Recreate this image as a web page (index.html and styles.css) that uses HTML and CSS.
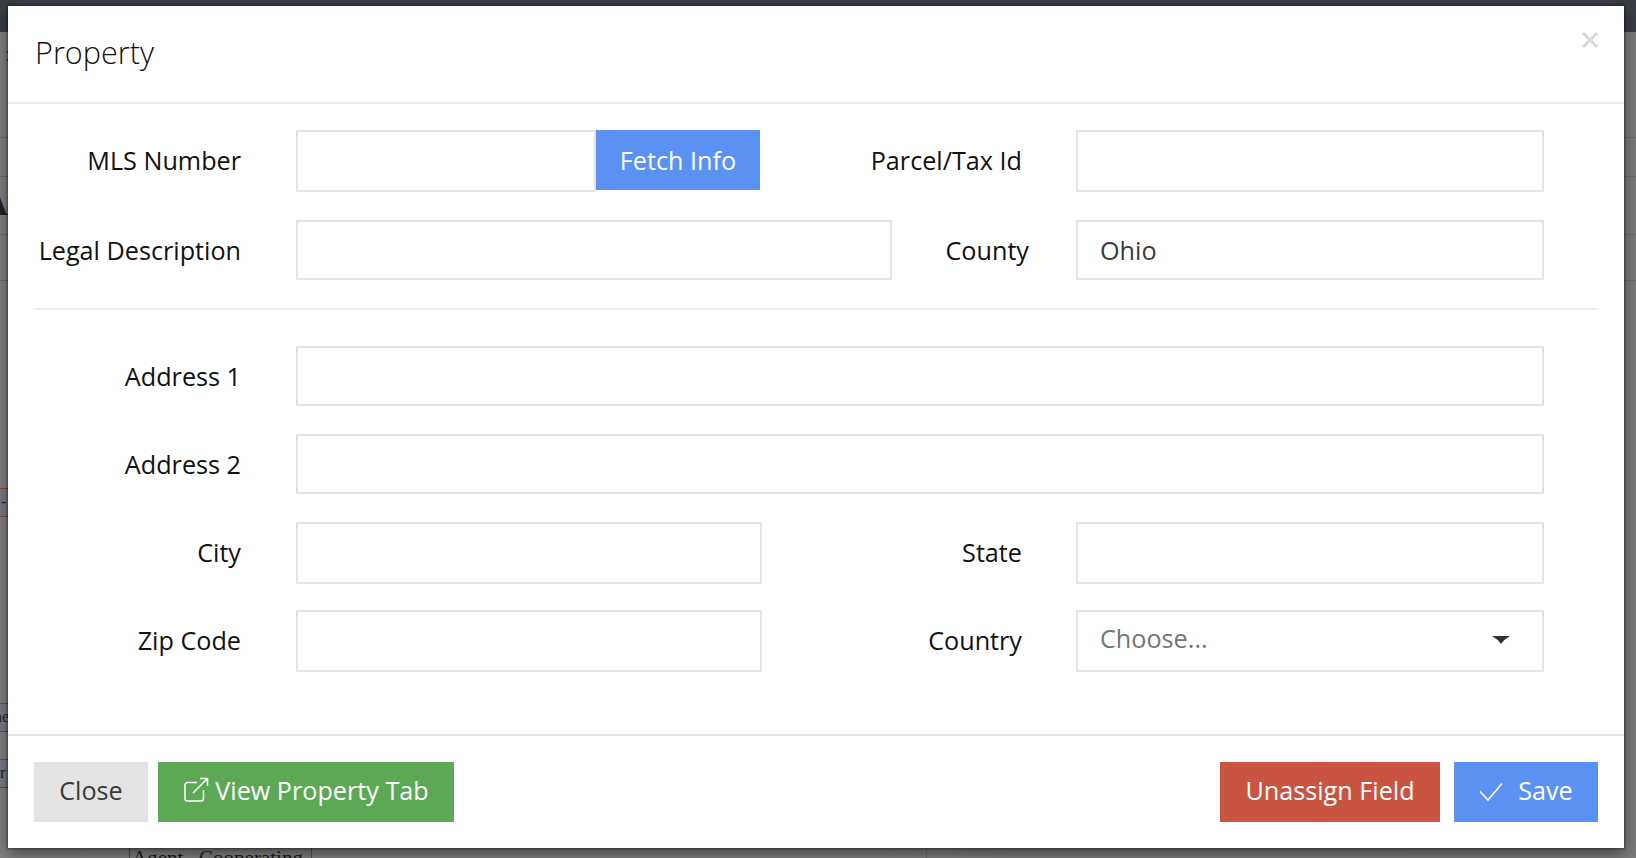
FILE: index.html
```html
<!DOCTYPE html>
<html lang="en">
<head>
<meta charset="utf-8">
<title>Property</title>
<link rel="stylesheet" href="styles.css">
</head>
<body>
<div class="backdrop" aria-hidden="true">
  <div class="topbar"></div>
  <div class="bd-row bd-h106"><span class="bd-glyph">:</span></div>
  <div class="bd-row bd-h39"></div>
  <div class="bd-row bd-h58"><span class="bd-big">A</span></div>
  <div class="bd-row bd-h46"></div>
  <div class="bd-spacer bd-h207"></div>
  <div class="bd-cell bd-h29"><span class="bd-text">-</span></div>
  <div class="bd-spacer bd-h186"></div>
  <div class="bd-cell bd-h29"><span class="bd-text bd-shift">ne</span></div>
  <div class="bd-spacer bd-h27"></div>
  <div class="bd-cell bd-h29"><span class="bd-text bd-shift2">r</span></div>
  <div class="bd-spacer bd-h60"></div>
  <div class="bd-agent"><span class="bd-agent-box">Agent &nbsp; Cooperating</span><span class="bd-rule"></span></div>
</div>

<main class="modal">
  <header class="modal-head">
    <h1 class="modal-title">Property</h1>
    <button class="modal-x" type="button" aria-label="Close">
      <svg width="16" height="16" viewBox="0 0 16 16"><path d="M1 1 15 15M15 1 1 15" stroke="#d6d6d6" stroke-width="2.6" fill="none"/></svg>
    </button>
  </header>

  <form class="modal-body">
    <div class="row row-half row-raised r-gap28">
      <label class="label">MLS Number</label>
      <div class="group">
        <input class="field field-mls" type="text">
        <button class="btn btn-blue btn-fetch" type="button">Fetch Info</button>
      </div>
      <label class="label label-right">Parcel/Tax Id</label>
      <input class="field field-tall" type="text">
    </div>

    <div class="row row-legal r-gap28">
      <label class="label">Legal Description</label>
      <input class="field" type="text">
      <label class="label label-right">County</label>
      <input class="field" type="text" value="Ohio">
    </div>

    <hr class="divider">

    <div class="row row-full r-gap28">
      <label class="label">Address 1</label>
      <input class="field" type="text">
    </div>

    <div class="row row-full r-gap28">
      <label class="label">Address 2</label>
      <input class="field" type="text">
    </div>

    <div class="row row-half row-raised r-gap26">
      <label class="label">City</label>
      <input class="field field-tall" type="text">
      <label class="label label-right">State</label>
      <input class="field field-tall" type="text">
    </div>

    <div class="row row-half row-raised">
      <label class="label">Zip Code</label>
      <input class="field field-tall" type="text">
      <label class="label label-right">Country</label>
      <div class="select-wrap">
        <select class="field field-tall field-select"><option>Choose...</option></select>
        <svg class="caret" width="18" height="8" viewBox="0 0 18 8"><path d="M0 0H18Q12.500 3 9 8 5.500 3 0 0Z" fill="#333"/></svg>
      </div>
    </div>
  </form>

  <footer class="modal-foot">
    <div class="foot-side">
      <button class="btn btn-grey btn-close" type="button">Close</button>
      <button class="btn btn-green btn-view" type="button">
        <svg class="ico-ext" width="26" height="26" viewBox="0 0 26 26"><path d="M20.500 13v8.500a2.500 2.500 0 0 1-2.500 2.500H4.500A2.500 2.500 0 0 1 2 21.500V8a2.500 2.500 0 0 1 2.500-2.500H14M10 16 24.500 1.500M17 1.500h7.500V9" stroke="#fff" stroke-width="1.500" fill="none"/></svg>
        <span>View Property Tab</span>
      </button>
    </div>
    <div class="foot-side foot-right">
      <button class="btn btn-red btn-unassign" type="button">Unassign Field</button>
      <button class="btn btn-blue btn-save" type="button">
        <svg class="ico-check" width="24" height="20" viewBox="0 0 24 20"><path d="M1 9.500 9 18 23 1.500" stroke="#fff" stroke-width="1.600" fill="none"/></svg>
        <span>Save</span>
      </button>
    </div>
  </footer>
</main>
</body>
</html>
```

FILE: styles.css
```css
* { box-sizing: border-box; }
html, body { margin: 0; height: 100%; }
body {
  position: relative;
  width: 1636px;
  height: 858px;
  overflow: hidden;
  background: #7d7d7d;
  font-family: "Open Sans", "Liberation Sans", sans-serif;
  color: #111;
}

/* dimmed page behind the dialog */
.backdrop {
  position: absolute;
  inset: 0;
  overflow: hidden;
  display: flex;
  flex-direction: column;
  background: linear-gradient(90deg, #828282, #7c7c7c);
  font-family: "Liberation Serif", serif;
  color: #222;
}
.topbar { height: 32px; flex: none; background: #3a3f45; }
.bd-row { flex: none; border-bottom: 1px solid #6c6c6c; }
.bd-spacer, .bd-cell { flex: none; }
.bd-h106 { height: 106px; }
.bd-h39 { height: 39px; }
.bd-h58 { height: 58px; }
.bd-h46 { height: 46px; }
.bd-h207 { height: 207px; }
.bd-h186 { height: 186px; }
.bd-h29 { height: 29px; }
.bd-h27 { height: 27px; }
.bd-h60 { height: 60px; }
.bd-glyph { display: block; font: 18px/1 "Liberation Sans", sans-serif; margin: 14px 0 0 5px; color: #333; }
.bd-big { display: block; font: 700 33px/54px "Liberation Serif", serif; margin-left: -16px; }
.bd-cell {
  width: 60px;
  border-top: 1px solid #86483f;
  border-bottom: 1px solid #86483f;
  background: #7a7c88;
  font-size: 16px;
  line-height: 26px;
}
.bd-text { display: block; padding-left: 1px; }
.bd-shift { margin-left: -6px; padding-left: 0; }
.bd-shift2 { padding-left: 0; }
.bd-agent {
  flex: none;
  display: flex;
  height: 10px;
  padding-left: 129px;
  font-size: 21px;
  line-height: 21px;
  color: #1c1c1c;
}
.bd-agent-box {
  flex: none;
  width: 183px;
  padding-left: 2px;
  overflow: hidden;
  white-space: nowrap;
  border-left: 1px solid #7a4038;
  border-right: 1px solid #7a4038;
}
.bd-rule { flex: none; width: 1px; margin-left: 614px; background: #6c6c6c; }

/* dialog */
.modal {
  position: relative;
  width: 1616px;
  margin: 6px 0 0 8px;
  background: #fff;
  box-shadow: 0 0 2px 1px rgba(0, 0, 0, .35), 0 5px 15px rgba(0, 0, 0, .5);
}
.modal-head {
  display: flex;
  align-items: center;
  justify-content: space-between;
  height: 98px;
  padding: 0 26px 4px 27px;
  border-bottom: 2px solid #eeeeee;
}
.modal-title {
  margin: 0;
  font-size: 30.6px;
  font-weight: 300;
  color: #111;
}
.modal-x {
  display: flex;
  padding: 0;
  margin-top: -24px;
  border: 0;
  background: none;
}

.modal-body { padding: 26px 26px 62px; }
.row { display: grid; align-items: center; width: 1510px; }
.row-half { grid-template-columns: 207px 55px 466px 260px 54px 468px; }
.row-legal { grid-template-columns: 207px 55px 596px 137px 47px 468px; }
.row-full { grid-template-columns: 207px 55px 1248px; }
.row > .field, .row > .group, .row > .select-wrap { width: 100%; }
.row > .label + .field, .row > .label + .group { grid-column-start: 3; }
.row > .label-right { grid-column-start: 4; }
.row > .label-right + .field,
.row > .label-right + .select-wrap { grid-column-start: 6; }
.row-raised .label { padding-bottom: 2px; }
.r-gap28 { margin-bottom: 28px; }
.r-gap26 { margin-bottom: 26px; }

.label {
  text-align: right;
  font-size: 25.2px;
  line-height: 32px;
  color: #111;
}
.field {
  display: block;
  height: 60px;
  padding: 0 22px;
  border: 2px solid #e4e4e4;
  border-radius: 0;
  background: #fff;
  font: 25.2px "Open Sans", "Liberation Sans", sans-serif;
  color: #3a3a3a;
  outline: none;
}
.field-tall { height: 62px; }
.group { display: flex; align-items: flex-start; }
.group .field-mls { width: 300px; height: 62px; }
.select-wrap { position: relative; }
.field-select {
  width: 100%;
  appearance: none;
  -webkit-appearance: none;
  padding: 0 22px 6px;
  color: #757575;
}
.caret { position: absolute; top: 26px; right: 34px; }

.divider {
  margin: 0 0 36px;
  height: 2px;
  border: 0;
  background: #eeeeee;
}

.modal-foot {
  display: flex;
  justify-content: space-between;
  padding: 26px;
  border-top: 2px solid #e4e4e4;
}
.foot-side { display: flex; gap: 10px; }
.foot-right { gap: 14px; }
.btn {
  display: inline-flex;
  align-items: center;
  justify-content: center;
  height: 60px;
  padding: 0 0 4px;
  border: 0;
  border-radius: 0;
  font: 25.2px "Open Sans", "Liberation Sans", sans-serif;
  color: #fff;
}
.btn-blue { background: #5b91f3; }
.btn-green { background: #5ca855; }
.btn-red { background: #c95441; }
.btn-grey { background: #e4e4e4; color: #3a3a3a; }
.btn-fetch { width: 164px; flex: none; padding-bottom: 0; }
.btn-close { width: 114px; }
.btn-view { width: 296px; gap: 6px; }
.btn-unassign { width: 220px; }
.btn-save { width: 144px; gap: 15px; }
.ico-ext { flex: none; }
.ico-check { flex: none; margin-top: 4px; }
```
